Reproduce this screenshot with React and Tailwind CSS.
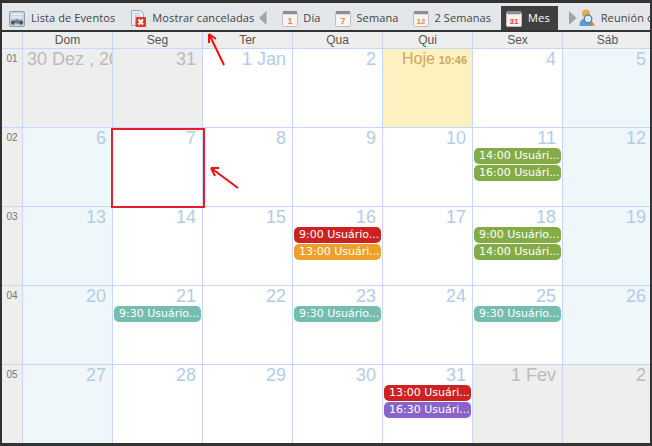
import React from 'react';

const GREEN = 'bg-[#84ac46]';
const RED = 'bg-[#cc2222]';
const ORANGE = 'bg-[#eea02c]';
const TEAL = 'bg-[#75bdb1]';
const PURPLE = 'bg-[#8a63c9]';

const weeks = [
  { num: '01', days: [
    { n: '30 Dez , 2019', off: true }, { n: '31', off: true }, { n: '1 Jan' }, { n: '2' },
    { today: true }, { n: '4' }, { n: '5', end: true },
  ] },
  { num: '02', days: [
    { n: '6', end: true }, { n: '7' }, { n: '8' }, { n: '9' }, { n: '10' },
    { n: '11', ev: [['14:00 Usuári...', GREEN], ['16:00 Usuári...', GREEN]] }, { n: '12', end: true },
  ] },
  { num: '03', days: [
    { n: '13', end: true }, { n: '14' }, { n: '15' },
    { n: '16', ev: [['9:00 Usuário...', RED], ['13:00 Usuári...', ORANGE]] }, { n: '17' },
    { n: '18', ev: [['9:00 Usuário...', GREEN], ['14:00 Usuári...', GREEN]] }, { n: '19', end: true },
  ] },
  { num: '04', days: [
    { n: '20', end: true }, { n: '21', ev: [['9:30 Usuário...', TEAL]] }, { n: '22' },
    { n: '23', ev: [['9:30 Usuário...', TEAL]] }, { n: '24' },
    { n: '25', ev: [['9:30 Usuário...', TEAL]] }, { n: '26', end: true },
  ] },
  { num: '05', days: [
    { n: '27', end: true }, { n: '28' }, { n: '29' }, { n: '30' },
    { n: '31', ev: [['13:00 Usuári...', RED], ['16:30 Usuári...', PURPLE]] },
    { n: '1 Fev', off: true }, { n: '2', off: true },
  ] },
];

const CalIcon = ({ num, color = '#ee8a3a' }) => (
  <svg width="16" height="17" viewBox="0 0 16 17" className="shrink-0">
    <rect x="0.5" y="2.5" width="15" height="14" rx="1" fill="#f8f4f2" stroke="#c9b8c4" />
    <rect x="1" y="1" width="14" height="3" fill="#8f8c92" />
    <rect x="2" y="4" width="12" height="1" fill="#d9d6dc" />
    <text x="8" y="13.5" textAnchor="middle" fontSize={num.length > 1 ? 8 : 9} fontWeight="700" fill={color} fontFamily="Liberation Sans">{num}</text>
  </svg>
);

const ListIcon = () => (
  <svg width="16" height="17" viewBox="0 0 16 17" className="shrink-0">
    <rect x="0.5" y="1.5" width="15" height="15" rx="1.5" fill="#c3d3e2" stroke="#8d9fb0" />
    <rect x="2.5" y="3.5" width="11" height="1.5" fill="#eef2f6" />
    <rect x="2.5" y="6.5" width="11" height="1.5" fill="#eef2f6" />
    <circle cx="4" cy="12.5" r="2.2" fill="#55585c" />
    <circle cx="8" cy="11.5" r="2.2" fill="#73767a" />
    <circle cx="12" cy="12.5" r="2.2" fill="#55585c" />
  </svg>
);

const CancelIcon = () => (
  <svg width="15" height="18" viewBox="0 0 15 18" className="shrink-0">
    <path d="M0.5 1.5h9l3 3v12h-12z" fill="#e9eef4" stroke="#9fa9ba" />
    <rect x="3" y="4" width="6" height="1" fill="#b9c4d2" />
    <rect x="3" y="6.5" width="6" height="1" fill="#b9c4d2" />
    <rect x="4.5" y="8" width="10.5" height="10" rx="1" fill="#dc3c28" />
    <path d="M7.5 10.5l4.5 5M12 10.5l-4.5 5" stroke="#fff" strokeWidth="2" />
  </svg>
);

const UserSearchIcon = () => (
  <svg width="16" height="18" viewBox="0 0 16 18" className="shrink-0">
    <circle cx="7" cy="4.5" r="4" fill="#e5a94c" />
    <path d="M0.5 16c0-4 2.5-6.5 6.5-6.5s6 2 7 5l-1 2.5H1z" fill="#5f9ad6" />
    <circle cx="9" cy="10" r="3.8" fill="#d6ebf8" stroke="#4d7fae" strokeWidth="1.3" />
    <path d="M11.5 13l3.5 3.5" stroke="#e2803a" strokeWidth="2.2" />
  </svg>
);

const ToolItem = ({ icon, label, active, className = '' }) => (
  <div className={`flex h-6 shrink-0 items-center ${active ? 'bg-[#3f3f3f] pl-[5px] pr-[8px] text-white' : 'px-[4px] text-[#444]'} ${className}`}>
    {icon}
    <span className="whitespace-nowrap">{label}</span>
  </div>
);

const Caret = ({ left }) => (
  <svg width="8" height="14" viewBox="0 0 8 14" className="shrink-0">
    <path d={left ? 'M7.5 0v14L0 7z' : 'M0 0v14l7.5-7z'} fill="#a3a3a3" />
  </svg>
);

const Toolbar = () => (
  <div className="flex h-[29px] items-center overflow-hidden border-b-2 border-[#333] bg-[#e3e7ea] pl-[3px] pt-[3px] font-['Open_Sans',sans-serif] text-[11px] tracking-[0.1px]">
    <ToolItem className="gap-[6px]" icon={<ListIcon />} label="Lista de Eventos" />
    <ToolItem className="ml-[8px] gap-[6px]" icon={<CancelIcon />} label="Mostrar canceladas" />
    <div className="ml-[1px] flex"><Caret left /></div>
    <ToolItem className="ml-[11px] gap-[5px]" icon={<CalIcon num="1" />} label="Día" />
    <ToolItem className="ml-[7px] gap-[5px]" icon={<CalIcon num="7" />} label="Semana" />
    <ToolItem className="ml-[7px] gap-[5px]" icon={<CalIcon num="12" />} label="2 Semanas" />
    <ToolItem className="ml-[6px] gap-[6px]" active icon={<CalIcon num="31" color="#e8442a" />} label="Mes" />
    <div className="ml-[11px] flex"><Caret /></div>
    <ToolItem className="-ml-[2px] gap-[6px]" icon={<UserSearchIcon />} label="Reunión de" />
  </div>
);

const Day = ({ day }) => {
  let bg = 'bg-white';
  if (day.off) bg = 'bg-[#eeeeee]';
  else if (day.today) bg = 'bg-[#fff0c0]';
  else if (day.end) bg = 'bg-[#eff7fb]';
  return (
    <div className={`min-w-0 overflow-hidden border-l border-[#c3d9ff] ${bg}`}>
      {day.today ? (
        <div className="flex h-[20px] items-baseline justify-end whitespace-nowrap pr-[5px] text-[#c9a860]">
          <span className="text-[16px] leading-[20px]">Hoje</span>
          <span className="ml-[4px] text-[11px] font-bold">10:46</span>
        </div>
      ) : (
        <div className={`h-[20px] whitespace-nowrap pr-[6px] text-[18px] leading-[20px] ${day.off ? 'text-[#bbbbbb]' : 'text-[#b3cce6]'} ${day.n.startsWith('30 Dez') ? 'pl-[4px] text-left' : 'text-right'}`}>
          {day.n}
        </div>
      )}
      <div className="flex flex-col gap-[1px] pl-[1px] pr-[1px]">
        {(day.ev || []).map(([label, color], i) => (
          <div key={i} className={`h-4 overflow-hidden whitespace-nowrap rounded-[5px] pl-[5px] font-['DejaVu_Sans',sans-serif] text-[11px] leading-4 text-white ${color}`}>
            {label}
          </div>
        ))}
      </div>
    </div>
  );
};

export default function App() {
  return (
    <div className="relative h-[446px] w-[652px] overflow-hidden border-x-2 border-y-[3px] border-[#333] bg-white font-['Liberation_Sans',sans-serif]">
      <Toolbar />
      <div className="grid h-[17px] grid-cols-[20px_repeat(7,90px)] border-b border-[#c3d9ff] bg-[#eeeeee] text-center text-[12px] leading-[16px] text-[#555]">
        <div />
        {['Dom', 'Seg', 'Ter', 'Qua', 'Qui', 'Sex', 'Sáb'].map((d) => (
          <div key={d} className="border-l border-[#c3d9ff]">{d}</div>
        ))}
      </div>
      {weeks.map((w) => (
        <div key={w.num} className="grid h-[79px] grid-cols-[20px_repeat(7,90px)] border-b border-[#c3d9ff] last:h-[80px] last:border-b-0">
          <div className="bg-[#eeeeee] pt-[4px] text-center text-[10px] leading-[12px] text-[#777]">{w.num}</div>
          {w.days.map((d, i) => <Day key={i} day={d} />)}
        </div>
      ))}

      {/* anotacoes vermelhas por cima */}
      <div className="pointer-events-none absolute left-[109px] top-[125px] h-[80px] w-[94px] border-2 border-[#e81c2c]" />
      <svg className="pointer-events-none absolute left-[-2px] top-[-3px]" width="652" height="446">
        <path d="M224 65L209 34M209 34l0 9M209 34l7 5" stroke="#f01010" strokeWidth="2" fill="none" />
        <path d="M238 188L211 168M211 168l8 0M211 168l4 8" stroke="#f01010" strokeWidth="2" fill="none" />
      </svg>
    </div>
  );
}
